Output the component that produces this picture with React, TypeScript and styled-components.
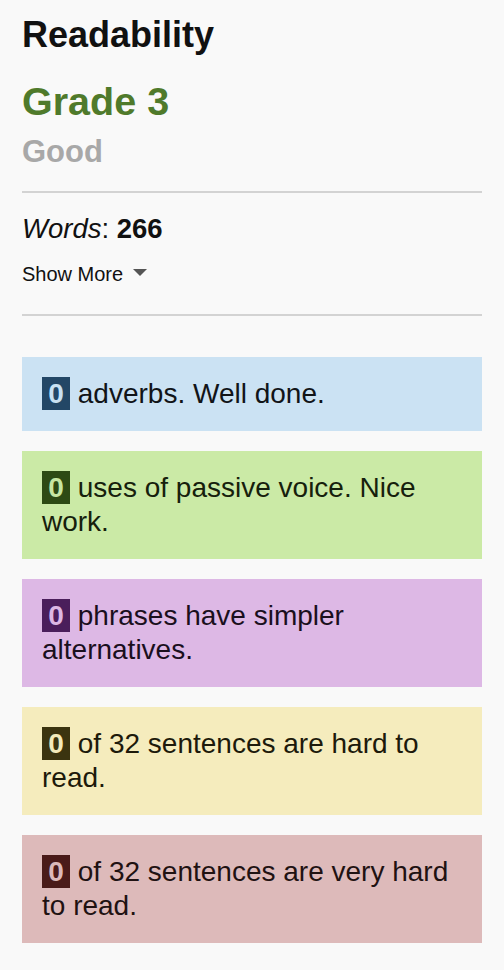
import { createGlobalStyle } from 'styled-components'
import styled from 'styled-components'

const GlobalStyle = createGlobalStyle`
  html, body {
    margin: 0;
    padding: 0;
    background: #f9f9f9;
  }
  body {
    font-family: 'Liberation Sans', Arial, Helvetica, sans-serif;
    color: #111;
  }
`

const Panel = styled.div`
  display: flex;
  flex-direction: column;
  padding: 15px 22px 20px;
`

const Title = styled.h1`
  margin: 0;
  font-size: 36px;
  line-height: 40px;
  font-weight: 700;
  color: #111;
`

const Grade = styled.div`
  margin-top: 24px;
  font-size: 39.5px;
  line-height: 44px;
  font-weight: 700;
  color: #4f7a2b;
`

const Verdict = styled.div`
  margin-top: 11px;
  font-size: 31px;
  line-height: 36px;
  font-weight: 700;
  color: #a8a8a8;
`

const Divider = styled.hr<{ $gap: number }>`
  margin: ${(p) => p.$gap}px 0 0;
  border: 0;
  border-top: 2px solid #d3d3d3;
  height: 0;
`

const Words = styled.div`
  margin-top: 20px;
  font-size: 27.5px;
  line-height: 32px;
  color: #111;

  & em {
    font-style: italic;
  }
  & strong {
    font-weight: 700;
  }
`

const ShowMore = styled.button`
  display: flex;
  align-items: center;
  gap: 10px;
  align-self: flex-start;
  margin-top: 17px;
  padding: 0;
  border: 0;
  background: none;
  font-family: inherit;
  font-size: 20px;
  line-height: 24px;
  color: #111;
  cursor: pointer;

  & svg {
    width: 14px;
    height: 7px;
    margin-bottom: 4px;
  }
`

const Cards = styled.div`
  display: flex;
  flex-direction: column;
  gap: 20px;
  margin-top: 41px;
`

interface Tone {
  bg: string
  badge: string
  text: string
  ink: string
}

const Card = styled.div<{ $tone: Tone }>`
  padding: 20px;
  background: ${(p) => p.$tone.bg};
  color: ${(p) => p.$tone.ink};
  font-size: 28px;
  line-height: 34px;
`

const Badge = styled.span<{ $tone: Tone }>`
  display: inline-block;
  vertical-align: top;
  width: 28px;
  height: 33px;
  line-height: 33px;
  text-align: center;
  font-weight: 700;
  background: ${(p) => p.$tone.badge};
  color: ${(p) => p.$tone.text};
`

const tones: Record<string, Tone> = {
  blue: { bg: '#cbe2f3', badge: '#234766', text: '#c9e1f2', ink: '#111418' },
  green: { bg: '#cbeaa6', badge: '#2d4a14', text: '#c6e6a2', ink: '#16200c' },
  purple: { bg: '#ddb8e5', badge: '#4a1e5b', text: '#dcb7e4', ink: '#1a0f1d' },
  yellow: { bg: '#f5ecbd', badge: '#3b3410', text: '#f3eabb', ink: '#1d1a0b' },
  red: { bg: '#ddbaba', badge: '#4a1b19', text: '#dcb9b9', ink: '#1f1212' },
}

const items: Array<{ tone: string; count: number; text: string }> = [
  { tone: 'blue', count: 0, text: 'adverbs. Well done.' },
  { tone: 'green', count: 0, text: 'uses of passive voice. Nice work.' },
  { tone: 'purple', count: 0, text: 'phrases have simpler alternatives.' },
  { tone: 'yellow', count: 0, text: 'of 32 sentences are hard to read.' },
  { tone: 'red', count: 0, text: 'of 32 sentences are very hard to read.' },
]

export default function App() {
  return (
    <>
      <GlobalStyle />
      <Panel>
        <Title>Readability</Title>
        <Grade>Grade 3</Grade>
        <Verdict>Good</Verdict>
        <Divider $gap={21} />
        <Words>
          <em>Words</em>: <strong>266</strong>
        </Words>
        <ShowMore type='button'>
          Show More
          <svg viewBox='0 0 14 7'>
            <path d='M0 0 L14 0 L7 7 Z' fill='#555' />
          </svg>
        </ShowMore>
        <Divider $gap={28} />
        <Cards>
          {items.map((it) => (
            <Card key={it.tone} $tone={tones[it.tone]}>
              <Badge $tone={tones[it.tone]}>{it.count}</Badge> {it.text}
            </Card>
          ))}
        </Cards>
      </Panel>
    </>
  )
}
